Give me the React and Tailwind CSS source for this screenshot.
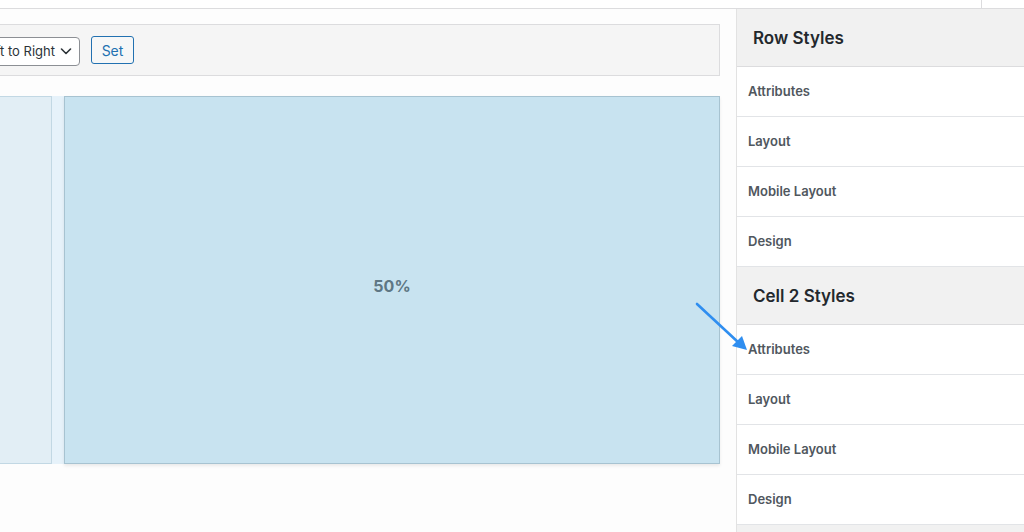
export default function App() {
  const sections = [
    { title: "Row Styles", items: ["Attributes", "Layout", "Mobile Layout", "Design"] },
    { title: "Cell 2 Styles", items: ["Attributes", "Layout", "Mobile Layout", "Design"] },
  ];
  return (
    <div
      className="relative w-[1024px] h-[532px] overflow-hidden bg-white flex flex-col"
      style={{ fontFamily: "Inter, 'Open Sans', 'Liberation Sans', sans-serif" }}
    >
      {/* top strip */}
      <div className="h-[9px] flex border-b border-[#dcdcde] bg-white shrink-0">
        <div className="flex-1" />
        <div className="w-[43px] border-l border-[#dcdcde]" />
      </div>

      <div className="flex flex-1 min-h-0">
        {/* main area */}
        <div className="w-[736px] shrink-0 pt-[15px] pr-[16px] bg-[#fdfdfd]">
          <div className="h-[52px] border border-[#dcdcde] border-l-0 bg-[#f5f5f5] flex items-center gap-[11px]">
            <div className="ml-[-60px] w-[140px] h-[29px] mt-[3px] border border-[#8c8f94] rounded-[4px] bg-white flex items-center justify-end pr-[7px] gap-[5px]">
              <span className="text-[13px] text-[#2c3338] whitespace-nowrap">Left to Right</span>
              <svg width="12" height="7" viewBox="0 0 12 7" fill="none">
                <path d="M1.5 1l4.5 4.5L10.5 1" stroke="#2c3338" strokeWidth="1.6" strokeLinecap="round" strokeLinejoin="round" />
              </svg>
            </div>
            <button className="h-[28px] w-[43px] border border-[#2271b1] rounded-[3px] bg-[#f6f7f7] text-[14px] text-[#2271b1] flex items-center justify-center">
              Set
            </button>
          </div>

          <div className="mt-[20px] h-[368px] flex">
            <div className="w-[53px] ml-[-1px] border border-l-0 border-[#c2d8e4] bg-[#e2eef5]" />
            <div className="w-[12px] bg-[#e6f2fa]" />
            <div className="flex-1 border border-[#a7c3d1] bg-[#c8e3f0] shadow-[0_2px_3px_rgba(0,0,0,0.08)] flex items-center justify-center pt-[11px]">
              <span className="text-[16px] font-bold text-[#5e7784]">50%</span>
            </div>
          </div>
        </div>

        {/* sidebar */}
        <div className="flex-1 border-l border-[#e2e2e2] bg-white flex flex-col">
          {sections.map((s) => (
            <div key={s.title}>
              <div className="h-[58px] bg-[#f1f1f1] border-b border-[#dcdcde] flex items-center pl-[16px] pt-[2px]">
                <span className="text-[17px] font-semibold text-[#23282d]">{s.title}</span>
              </div>
              {s.items.map((it) => (
                <div key={it} className="h-[50px] border-b border-[#e2e4e7] flex items-center pl-[11px] pt-[1px]">
                  <span className="text-[13px] font-semibold text-[#50575e]">{it}</span>
                </div>
              ))}
            </div>
          ))}
          <div className="flex-1 bg-[#f1f1f1]" />
        </div>
      </div>

      {/* annotation arrow */}
      <svg className="absolute left-[690px] top-[298px]" width="64" height="60" viewBox="0 0 64 60" fill="none">
        <line x1="7" y1="6" x2="49" y2="45" stroke="#2f8ef0" strokeWidth="2.6" strokeLinecap="round" />
        <path d="M57 52 L42 48 L52 38 Z" fill="#2f8ef0" />
      </svg>
    </div>
  );
}
